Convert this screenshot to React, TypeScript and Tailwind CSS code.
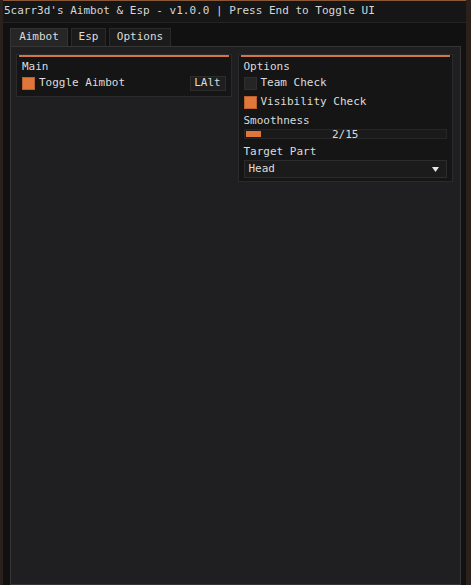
import React from "react";

const font = { fontFamily: '"DejaVu Sans Mono", "Liberation Mono", monospace' };

function Checkbox({ checked, label }: { checked: boolean; label: string }) {
  return (
    <div className="flex items-center h-[19px]">
      <div
        className={
          checked
            ? "w-[13px] h-[13px] bg-[#e0773a] border border-[#b8602e]"
            : "w-[13px] h-[13px] bg-[#252525] border border-[#2e2e2e]"
        }
      />
      <span className="ml-[4px]">{label}</span>
    </div>
  );
}

function Child({ title, children }: { title: string; children: React.ReactNode }) {
  return (
    <div className="bg-[#151515] border border-[#2a2a2a] px-[5px] pb-[3px]">
      <div className="h-[2px] bg-[#d27547] -mx-[3px]" />
      <div className="h-[15px] leading-[15px] mt-[2px]">{title}</div>
      {children}
    </div>
  );
}

export default function App() {
  return (
    <div className="w-[471px] h-[585px] bg-[#2a201c] overflow-hidden text-[11px] text-[#dcdcdc]" style={font}>
      <div className="ml-[3px] w-[463px] h-full flex flex-col border-t border-[#8a5836]">
        <div className="h-[22px] bg-[#161616] border-b border-[#242424] flex items-center pl-[1px] text-[#d6d6d6]">
          5carr3d's Aimbot &amp; Esp - v1.0.0 | Press End to Toggle UI
        </div>
        <div className="flex-1 bg-[#111111] flex flex-col pl-[7px] pr-[5px] pt-[5px]">
          <div className="flex gap-[3px] h-[18px] items-stretch">
            <div className="w-[58px] bg-[#262626] border border-b-0 border-[#333333] flex items-center justify-center">Aimbot</div>
            <div className="w-[35px] bg-[#1b1b1b] border border-b-0 border-[#2a2a2a] flex items-center justify-center">Esp</div>
            <div className="w-[62px] bg-[#1b1b1b] border border-b-0 border-[#2a2a2a] flex items-center justify-center">Options</div>
          </div>
          <div className="flex-1 bg-[#1f1e20] border border-[#353535] grid grid-cols-2 gap-[6px] pl-[5px] pr-[7px] pt-[7px] items-start content-start">
            <Child title="Main">
              <div className="flex items-center justify-between h-[19px]">
                <Checkbox checked label="Toggle Aimbot" />
                <div className="w-[36px] h-[15px] bg-[#1e1e1e] border border-[#2c2c2c] flex items-center justify-center">LAlt</div>
              </div>
            </Child>
            <Child title="Options">
              <Checkbox checked={false} label="Team Check" />
              <Checkbox checked label="Visibility Check" />
              <div className="h-[15px] leading-[15px] mt-[1px]">Smoothness</div>
              <div className="relative h-[10px] bg-[#1a1a1a] border border-[#262626] mt-[1px]">
                <div className="absolute left-[1px] top-[1px] w-[15px] h-[6px] bg-[#e0773a]" />
                <div className="absolute inset-0 flex items-center justify-center leading-none">2/15</div>
              </div>
              <div className="h-[15px] leading-[15px] mt-[5px]">Target Part</div>
              <div className="h-[18px] mt-[1px] bg-[#1b1b1b] border border-[#2c2c2c] flex items-center justify-between pl-[4px] pr-[7px]">
                <span>Head</span>
                <svg width="7" height="5" viewBox="0 0 7 5"><path d="M0 0H7L3.5 5Z" fill="#e6e6e6" /></svg>
              </div>
            </Child>
          </div>
        </div>
      </div>
    </div>
  );
}
